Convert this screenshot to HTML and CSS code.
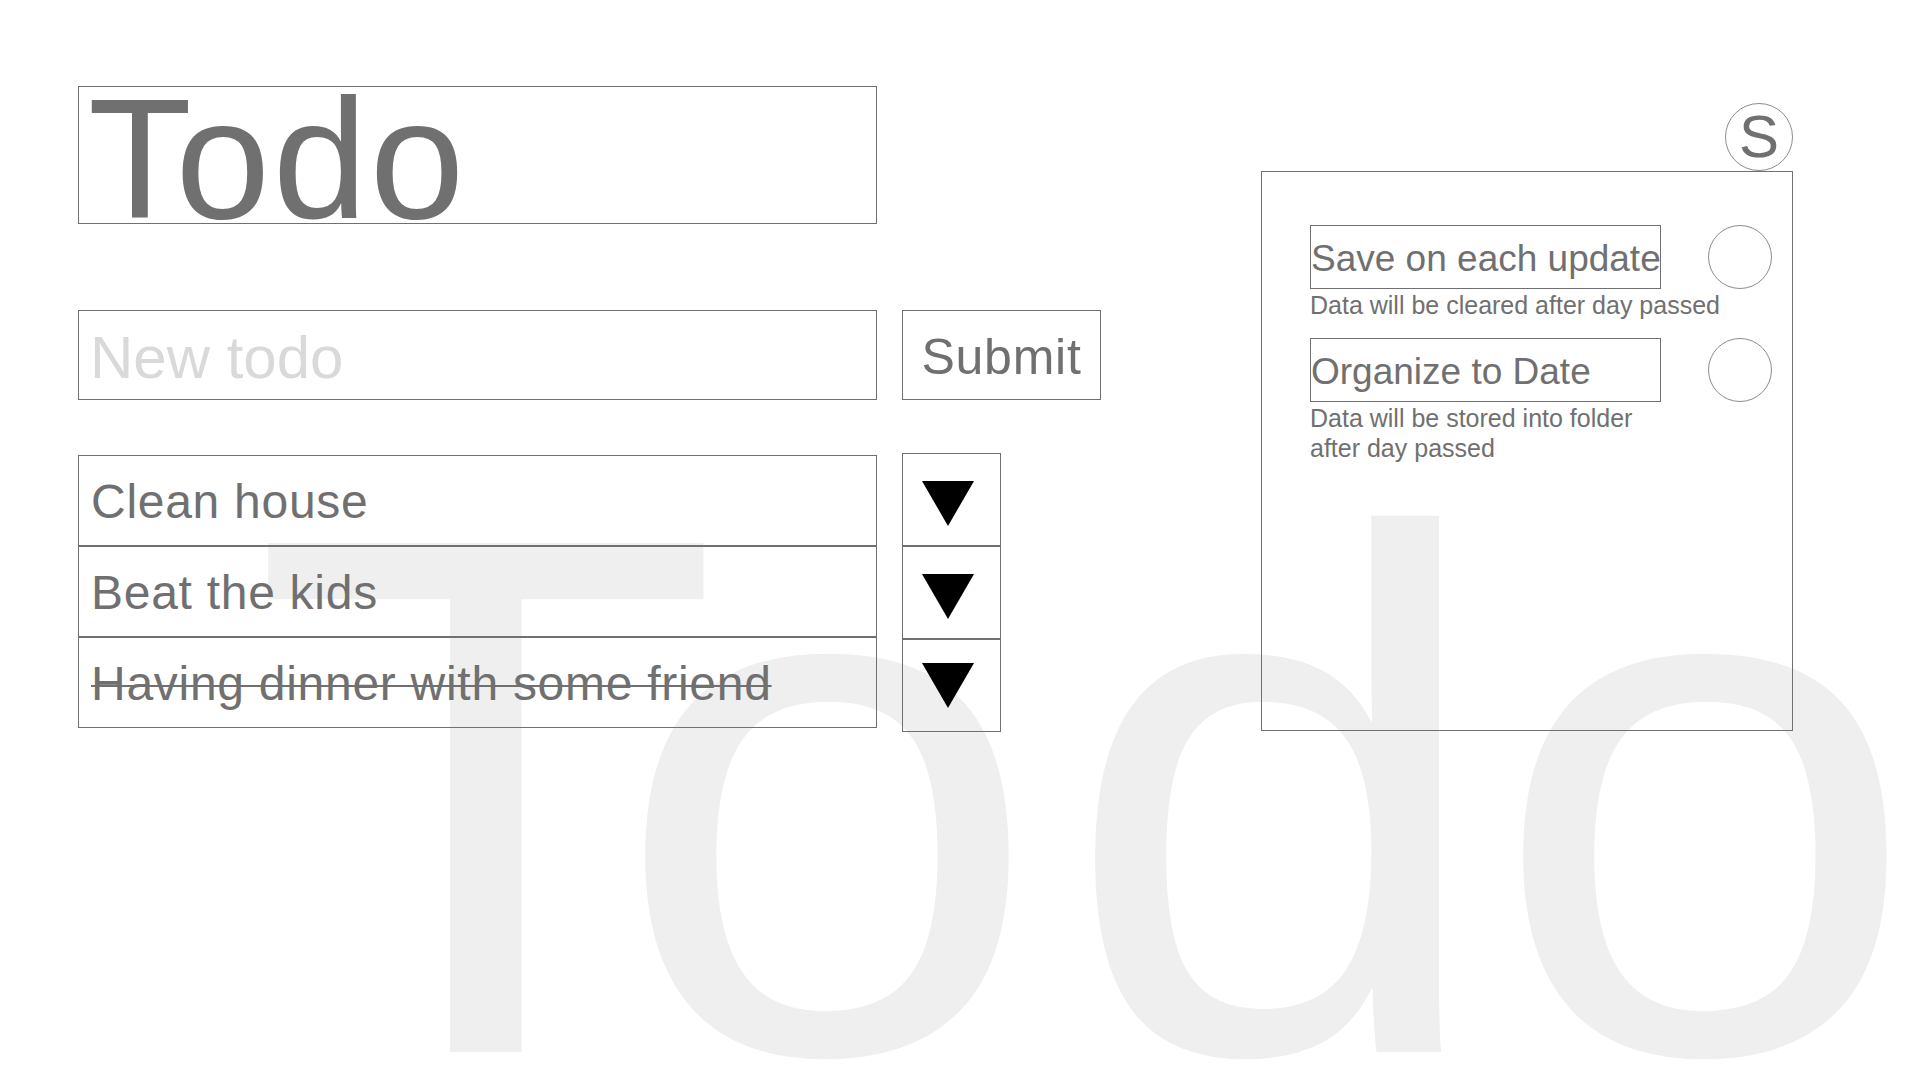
FILE: index.html
```html
<!DOCTYPE html>
<html lang="en">
<head>
<meta charset="utf-8">
<title>Todo</title>
<link rel="stylesheet" href="styles.css">
</head>
<body>
<div class="backdrop" aria-hidden="true"><div class="watermark"><span class="wm-t">T</span><span class="wm-o">o</span>do</div></div>
<main class="page">
  <section class="left">
    <div class="title-box"><h1 class="title">Todo</h1></div>
    <form class="new-row">
      <input class="new-input" type="text" placeholder="New todo">
      <button class="submit" type="button">Submit</button>
    </form>
    <div class="todo-area">
      <ul class="todo-list">
        <li class="todo-item">Clean house</li>
        <li class="todo-item">Beat the kids</li>
        <li class="todo-item done">Having dinner with some friend</li>
      </ul>
      <div class="toggles">
        <button class="toggle-btn" type="button"><svg class="tri" width="52" height="45" viewBox="0 0 52 45"><polygon points="0,0 52,0 26,45" fill="#000"/></svg></button>
        <button class="toggle-btn" type="button"><svg class="tri" width="52" height="45" viewBox="0 0 52 45"><polygon points="0,0 52,0 26,45" fill="#000"/></svg></button>
        <button class="toggle-btn" type="button"><svg class="tri" width="52" height="45" viewBox="0 0 52 45"><polygon points="0,0 52,0 26,45" fill="#000"/></svg></button>
      </div>
    </div>
  </section>
  <aside class="right">
    <div class="avatar">S</div>
    <div class="settings">
      <div class="option">
        <div class="option-row">
          <div class="option-label">Save on each update</div>
          <div class="radio"></div>
        </div>
        <p class="option-desc">Data will be cleared after day passed</p>
      </div>
      <div class="option">
        <div class="option-row">
          <div class="option-label">Organize to Date</div>
          <div class="radio"></div>
        </div>
        <p class="option-desc">Data will be stored into folder<br>after day passed</p>
      </div>
    </div>
  </aside>
</main>
</body>
</html>
```
FILE: styles.css
```css
html, body {
  margin: 0;
  padding: 0;
}

body {
  width: 1920px;
  height: 1080px;
  overflow: hidden;
  position: relative;
  background: #ffffff;
  font-family: "Liberation Sans", Arial, sans-serif;
  color: #707070;
}

.backdrop {
  position: absolute;
  left: 0;
  top: 0;
  width: 1920px;
  height: 1080px;
  overflow: hidden;
  z-index: 0;
}

.watermark {
  position: absolute;
  left: 251px;
  top: 537px;
  font-size: 740px;
  line-height: 0.7;
  color: #efefef;
  white-space: nowrap;
  transform: scaleX(1.04);
  transform-origin: 0 0;
}

.wm-t {
  margin-right: -104px;
}

.wm-o {
  margin-right: 21px;
}

.page {
  position: relative;
  z-index: 1;
  display: flex;
  padding: 86px 0 0 78px;
}

.left {
  width: 1023px;
}

.title-box {
  width: 799px;
  height: 138px;
  box-sizing: border-box;
  border: 1px solid #707070;
  padding-left: 9px;
}

.title {
  margin: 0;
  font-size: 170px;
  font-weight: 400;
  line-height: 144px;
  letter-spacing: 0.015em;
  white-space: nowrap;
}

.new-row {
  display: flex;
  gap: 25px;
  margin: 86px 0 0;
}

.new-input {
  width: 799px;
  height: 90px;
  box-sizing: border-box;
  border: 1px solid #707070;
  border-radius: 0;
  padding: 5px 0 0 11px;
  margin: 0;
  font-family: "Liberation Sans", Arial, sans-serif;
  font-size: 60px;
  color: #707070;
  background: transparent;
  outline: none;
}

.new-input::placeholder {
  color: #d9d9d9;
}

.submit {
  width: 199px;
  height: 90px;
  box-sizing: border-box;
  border: 1px solid #707070;
  border-radius: 0;
  margin: 0;
  padding: 5px 0 0;
  background: transparent;
  font-family: "Liberation Sans", Arial, sans-serif;
  font-size: 50px;
  line-height: 83px;
  letter-spacing: 0.015em;
  color: #707070;
}

.todo-area {
  display: flex;
  gap: 25px;
  margin-top: 53px;
}

.todo-list {
  list-style: none;
  margin: 2px 0 0;
  padding: 0;
  width: 799px;
}

.todo-item {
  height: 91px;
  box-sizing: border-box;
  border: 1px solid #707070;
  padding: 2px 0 0 12px;
  font-size: 48px;
  line-height: 87px;
  letter-spacing: 0.015em;
  white-space: nowrap;
}

.todo-item.done {
  text-decoration: line-through;
  text-decoration-thickness: 2px;
}

.toggles {
  display: flex;
  flex-direction: column;
  width: 99px;
}

.toggle-btn {
  display: flex;
  align-items: flex-start;
  justify-content: flex-start;
  height: 93px;
  box-sizing: border-box;
  border: 1px solid #707070;
  border-radius: 0;
  margin: 0;
  padding: 27px 0 0 19px;
  background: transparent;
}

.toggle-btn:last-child {
  padding-top: 23px;
}

.tri {
  display: block;
}

.right {
  margin-left: 160px;
  width: 532px;
  display: flex;
  flex-direction: column;
  align-items: flex-end;
}

.avatar {
  width: 68px;
  height: 68px;
  box-sizing: border-box;
  margin-top: 17px;
  border: 1px solid #8c8c8c;
  border-radius: 50%;
  display: flex;
  align-items: center;
  justify-content: center;
  font-size: 60px;
  line-height: 1;
  color: #707070;
}

.settings {
  align-self: stretch;
  height: 560px;
  box-sizing: border-box;
  border: 1px solid #707070;
  padding: 53px 0 0 48px;
}

.option + .option {
  margin-top: 18px;
}

.option-row {
  display: flex;
  align-items: flex-start;
  gap: 47px;
}

.option-label {
  width: 351px;
  height: 64px;
  box-sizing: border-box;
  border: 1px solid #707070;
  padding-top: 2px;
  font-size: 37px;
  line-height: 61px;
  white-space: nowrap;
}

.radio {
  width: 64px;
  height: 64px;
  box-sizing: border-box;
  border: 1px solid #8c8c8c;
  border-radius: 50%;
}

.option-desc {
  margin: 1px 0 0;
  font-size: 25px;
  line-height: 30px;
  white-space: nowrap;
}
```
